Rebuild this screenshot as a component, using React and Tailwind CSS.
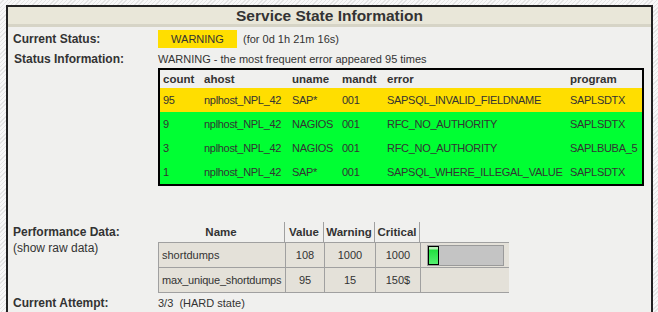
export default function App() {
  const rows = [
    { bg: "bg-[#ffde00]", c: ["95", "nplhost_NPL_42", "SAP*", "001", "SAPSQL_INVALID_FIELDNAME", "SAPLSDTX"] },
    { bg: "bg-[#00ff33]", c: ["9", "nplhost_NPL_42", "NAGIOS", "001", "RFC_NO_AUTHORITY", "SAPLSDTX"] },
    { bg: "bg-[#00ff33]", c: ["3", "nplhost_NPL_42", "NAGIOS", "001", "RFC_NO_AUTHORITY", "SAPLBUBA_5"] },
    { bg: "bg-[#00ff33]", c: ["1", "nplhost_NPL_42", "SAP*", "001", "SAPSQL_WHERE_ILLEGAL_VALUE", "SAPLSDTX"] },
  ];
  const cols = "grid grid-cols-[41px_88px_50px_45px_183px_75px]";
  const pcols = "grid grid-cols-[127px_39px_51px_45px_89px]";
  return (
    <div className="w-[658px] h-[312px] overflow-hidden pt-[5px] pl-[6px] bg-[repeating-linear-gradient(135deg,#f8f8f8_0px,#f8f8f8_2px,#e4e4e4_2px,#e4e4e4_3px)] font-['Liberation_Sans',Arial,sans-serif] text-[12px] text-[#333]">
      <div className="w-[647px] h-[400px] border-2 border-b-0 border-[#222] bg-[#f0f0ee]">
        <div className="h-[20px] bg-[#e9e7d9] border-b-[3px] border-[#d6d4c6] text-center font-bold text-[15.5px] leading-[17px] text-[#333]">
          Service State Information
        </div>
        <div className="grid grid-cols-[150px_1fr]">
          {/* Row 1 */}
          <div className="mt-[3px] h-[18px] flex items-center pl-[5px] font-bold">Current Status:</div>
          <div className="mt-[3px] h-[18px] flex items-center text-[11px]">
            <div className="w-[79px] h-[18px] bg-[#ffde00] flex items-center justify-center">WARNING</div>
            <span className="ml-[6px]">(for 0d 1h 21m 16s)</span>
          </div>
          {/* Row 2 */}
          <div className="mt-[3px] pl-[6px] font-bold leading-[17px]">Status Information:</div>
          <div className="mt-[3px] text-[11px]">
            <div className="leading-[17px]">WARNING - the most frequent error appeared 95 times</div>
            <div className="w-[486px] border-2 border-black">
              <div className={`${cols} h-[18px] leading-[18px] font-bold text-[11.5px]`}>
                {["count", "ahost", "uname", "mandt", "error", "program"].map((h) => (
                  <div key={h} className="pl-[3px]">{h}</div>
                ))}
              </div>
              {rows.map((r, i) => (
                <div key={i} className={`${cols} ${r.bg} h-[24px] leading-[24px] tracking-[-0.3px]`}>
                  {r.c.map((v, j) => (
                    <div key={j} className="pl-[3px] whitespace-nowrap">{v}</div>
                  ))}
                </div>
              ))}
            </div>
          </div>
          {/* Row 3 */}
          <div className="mt-[36px] pt-[2px] pl-[5px] leading-[16px]">
            <div className="font-bold">Performance Data:</div>
            <div>(show raw data)</div>
          </div>
          <div className="mt-[36px] text-[11px]">
            <div className={`${pcols} h-[20px] leading-[20px] font-bold text-center text-[11.5px]`}>
              <div className="border-r border-[#a0a0a0]">Name</div>
              <div className="border-r border-[#a0a0a0]">Value</div>
              <div className="border-r border-[#a0a0a0]">Warning</div>
              <div className="border-r border-[#a0a0a0]">Critical</div>
              <div></div>
            </div>
            <div className="w-[351px] border-l border-t border-[#a0a0a0] bg-[#e4e1d9]">
              <div className={`${pcols} h-[25px] leading-[24px] border-b border-[#a0a0a0]`}>
                <div className="border-r border-[#a0a0a0] pl-[3px]">shortdumps</div>
                <div className="border-r border-[#a0a0a0] text-center">108</div>
                <div className="border-r border-[#a0a0a0] text-center">1000</div>
                <div className="border-r border-[#a0a0a0] text-center">1000</div>
                <div className="pl-[6px] pt-[2px]">
                  <div className="w-[77px] h-[21px] bg-[#c4c4c4] border border-[#9a9a9a] flex">
                    <div className="w-[11px] h-full border border-black bg-[linear-gradient(to_bottom,#b8f0b8_0px,#b8f0b8_2px,#22e040_3px,#55f070_100%)]"></div>
                  </div>
                </div>
              </div>
              <div className={`${pcols} h-[25px] leading-[24px] border-b border-[#a0a0a0]`}>
                <div className="border-r border-[#a0a0a0] pl-[3px] whitespace-nowrap tracking-[-0.2px]">max_unique_shortdumps</div>
                <div className="border-r border-[#a0a0a0] text-center">95</div>
                <div className="border-r border-[#a0a0a0] text-center">15</div>
                <div className="border-r border-[#a0a0a0] text-center">150$</div>
                <div></div>
              </div>
            </div>
          </div>
          {/* Row 4 */}
          <div className="mt-[2px] pl-[5px] font-bold leading-[16px]">Current Attempt:</div>
          <div className="mt-[2px] leading-[16px] whitespace-pre text-[11px]">3/3  (HARD state)</div>
        </div>
      </div>
    </div>
  );
}
